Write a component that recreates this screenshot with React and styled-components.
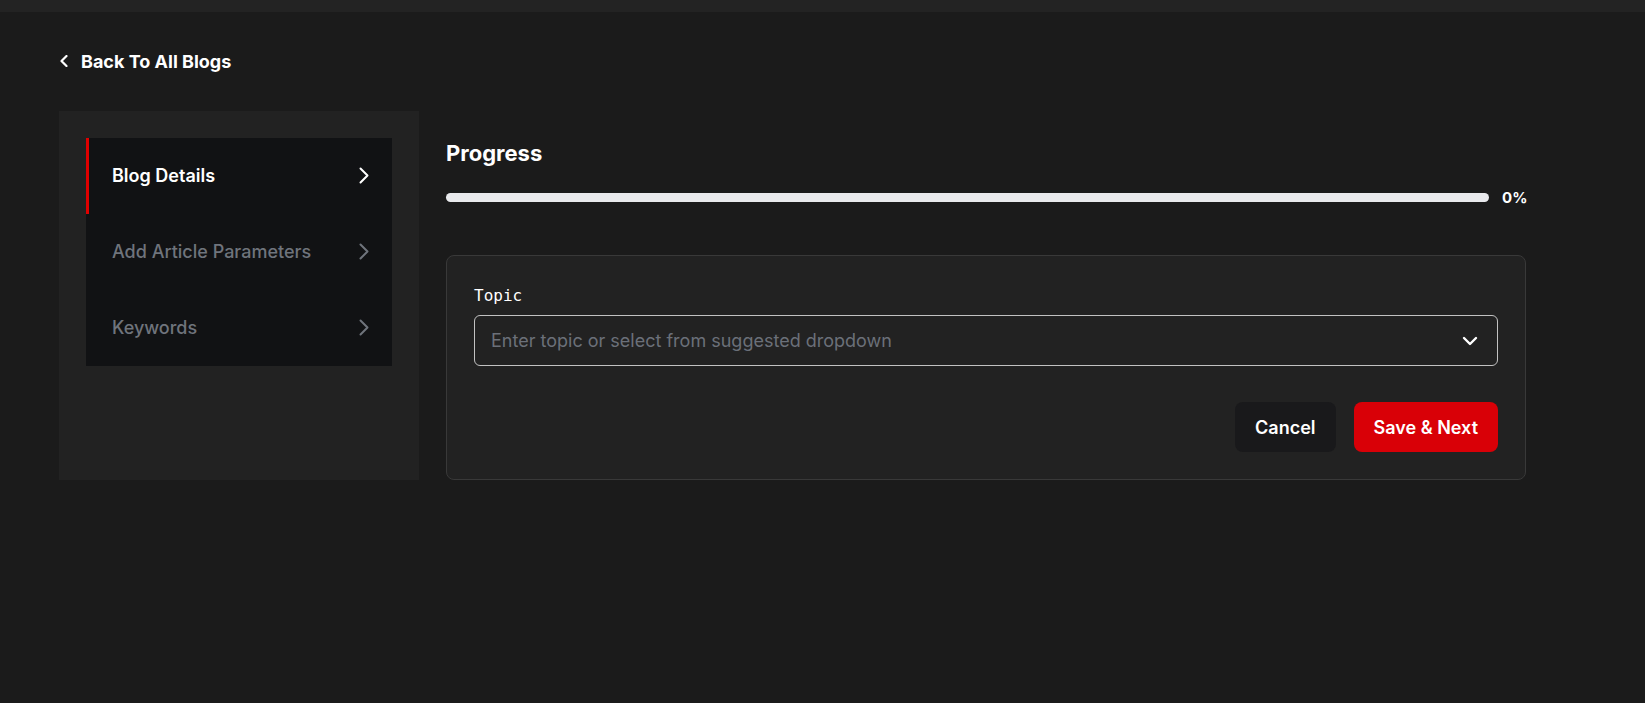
import React from 'react'
import styled, { createGlobalStyle } from 'styled-components'

const GlobalStyle = createGlobalStyle`
	html, body {
		margin: 0;
		padding: 0;
		background: #1b1b1b;
		font-family: Inter, 'Noto Sans', sans-serif;
		color: #fff;
	}
	* {
		box-sizing: border-box;
	}
`

const TopBar = styled.div`
	height: 12px;
	background: #232323;
`

const Page = styled.div`
	padding: 0 59px;
`

const BackLink = styled.a`
	display: flex;
	align-items: center;
	gap: 12px;
	margin-top: 38px;
	height: 22px;
	color: #fff;
	font-size: 18px;
	font-weight: 700;
	text-decoration: none;
	cursor: pointer;
`

const Layout = styled.div`
	display: flex;
	align-items: flex-start;
	gap: 27px;
	margin-top: 39px;
`

const Sidebar = styled.aside`
	width: 360px;
	height: 369px;
	padding: 27px;
	background: #222222;
	flex-shrink: 0;
`

const Nav = styled.ul`
	list-style: none;
	margin: 0;
	padding: 0;
	background: #111214;
`

const NavItem = styled.li`
	display: flex;
	align-items: center;
	justify-content: space-between;
	height: 76px;
	padding: 0 22px 2px 23px;
	border-left: 3px solid ${({ $active }) => ($active ? '#e00000' : 'transparent')};
	color: ${({ $active }) => ($active ? '#ffffff' : '#6f747c')};
	font-size: 18px;
	font-weight: ${({ $active }) => ($active ? 600 : 500)};
	cursor: pointer;
`

const Main = styled.main`
	width: 1081px;
	padding-top: 28px;
`

const ProgressTitle = styled.h2`
	margin: 0;
	font-size: 22px;
	font-weight: 700;
	line-height: 29px;
`

const ProgressRow = styled.div`
	display: flex;
	align-items: center;
	gap: 13px;
	margin-top: 20px;
`

const Bar = styled.div`
	flex: 1;
	height: 9px;
	border-radius: 5px;
	background: #e9eaed;
	overflow: hidden;
`

const Fill = styled.div`
	height: 100%;
	background: #e00000;
`

const Percent = styled.span`
	font-size: 15px;
	font-weight: 700;
	width: 25px;
`

const Card = styled.section`
	margin-top: 48px;
	width: 1080px;
	padding: 30px 27px 27px;
	background: #222222;
	border: 1px solid #393939;
	border-radius: 8px;
`

const Label = styled.label`
	display: block;
	font-family: 'DejaVu Sans Mono', monospace;
	font-size: 16px;
	line-height: 20px;
	color: #fff;
	margin-bottom: 9px;
`

const Select = styled.div`
	display: flex;
	align-items: center;
	justify-content: space-between;
	height: 51px;
	padding: 0 19px 0 16px;
	border: 1px solid #c2c2c2;
	border-radius: 6px;
	color: #6b7079;
	font-size: 18px;
	cursor: pointer;
`

const Actions = styled.div`
	display: flex;
	justify-content: flex-end;
	gap: 18px;
	margin-top: 36px;
`

const Button = styled.button`
	height: 50px;
	padding: 0 20px;
	border: none;
	border-radius: 8px;
	background: ${({ $primary }) => ($primary ? '#d90007' : '#19191b')};
	color: #fff;
	font-family: Inter, sans-serif;
	font-size: 18px;
	font-weight: 600;
	cursor: pointer;
`

const Chevron = ({ dir = 'right', color = 'currentColor' }) => {
	if (dir === 'left') {
		return (
			<svg width='10' height='12' viewBox='0 0 10 12' fill='none'>
				<path d='M7.5 1 L2.5 6 L7.5 11' stroke={color} strokeWidth='2.2' strokeLinecap='round' strokeLinejoin='round' />
			</svg>
		)
	}
	if (dir === 'down') {
		return (
			<svg width='16' height='10' viewBox='0 0 16 10' fill='none'>
				<path d='M2 2 L8 8 L14 2' stroke={color} strokeWidth='2.4' strokeLinecap='round' strokeLinejoin='round' />
			</svg>
		)
	}
	return (
		<svg width='12' height='17' viewBox='0 0 12 17' fill='none'>
			<path d='M2.5 1.5 L9.5 8.5 L2.5 15.5' stroke={color} strokeWidth='2' strokeLinecap='round' strokeLinejoin='round' />
		</svg>
	)
}

const steps = [
	{ label: 'Blog Details', active: true },
	{ label: 'Add Article Parameters' },
	{ label: 'Keywords' },
]

export default function App() {
	const progress = 0

	return (
		<>
			<GlobalStyle />
			<TopBar />
			<Page>
				<BackLink>
					<Chevron dir='left' />
					Back To All Blogs
				</BackLink>
				<Layout>
					<Sidebar>
						<Nav>
							{steps.map((step) => (
								<NavItem key={step.label} $active={step.active}>
									{step.label}
									<Chevron />
								</NavItem>
							))}
						</Nav>
					</Sidebar>
					<Main>
						<ProgressTitle>Progress</ProgressTitle>
						<ProgressRow>
							<Bar>
								<Fill style={{ width: `${progress}%` }} />
							</Bar>
							<Percent>{progress}%</Percent>
						</ProgressRow>
						<Card>
							<Label>Topic</Label>
							<Select>
								Enter topic or select from suggested dropdown
								<Chevron dir='down' color='#ffffff' />
							</Select>
							<Actions>
								<Button>Cancel</Button>
								<Button $primary>Save &amp; Next</Button>
							</Actions>
						</Card>
					</Main>
				</Layout>
			</Page>
		</>
	)
}
